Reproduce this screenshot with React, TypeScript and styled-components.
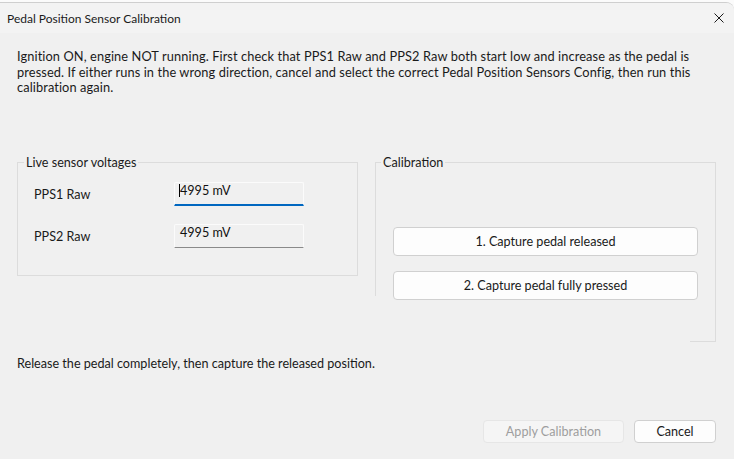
import React from "react";
import styled, { createGlobalStyle } from "styled-components";

const GlobalStyle = createGlobalStyle`
  html, body {
    margin: 0;
    padding: 0;
    background: #fbfbfb;
  }
  * {
    box-sizing: border-box;
  }
`;

const font = `"Lato", "Liberation Sans", sans-serif`;

const Window = styled.div`
  margin-top: 2px;
  height: 457px;
  background: #f0f0f0;
  border-top: 1px solid #cfcfcf;
  border-top-right-radius: 8px;
  display: flex;
  flex-direction: column;
  font-family: ${font};
  font-size: 12.6px;
  color: #1a1a1a;
  overflow: hidden;
`;

const TitleBar = styled.div`
  height: 30px;
  flex-shrink: 0;
  display: flex;
  align-items: center;
  justify-content: space-between;
  padding: 0 10px 0 7px;
  background: #f3f3f3;
`;

const TitleText = styled.span`
  font-size: 12px;
  color: #1b1b1b;
`;

const CloseButton = styled.span`
  display: flex;
  align-items: center;
  color: #1b1b1b;
`;

const Body = styled.div`
  flex: 1;
  display: flex;
  flex-direction: column;
  padding: 16px 18px 16px 17px;
`;

const Intro = styled.p`
  margin: 0;
  font-size: 12.8px;
  line-height: 15.5px;
  letter-spacing: 0.1px;
`;

const Groups = styled.div`
  display: grid;
  grid-template-columns: 341px 341px;
  column-gap: 17px;
  align-items: start;
  margin-top: 66px;
`;

const GroupBox = styled.div<{ partial?: boolean }>`
  position: relative;
  border: 1px solid #dcdcdc;
  ${(p) =>
    p.partial &&
    `
    border-left: none;
    border-bottom: none;
    &::before {
      content: "";
      position: absolute;
      left: 0;
      top: 0;
      width: 1px;
      height: 133px;
      background: #dcdcdc;
    }
    &::after {
      content: "";
      position: absolute;
      right: -1px;
      bottom: 0;
      width: 26px;
      height: 1px;
      background: #dcdcdc;
    }
  `}
`;

const Legend = styled.span`
  position: absolute;
  top: -8px;
  left: 6px;
  padding: 0 2px;
  line-height: 16px;
  background: #f0f0f0;
`;

const SensorList = styled.div`
  display: flex;
  flex-direction: column;
  gap: 18px;
  padding: 19px 0 27px 16px;
`;

const SensorRow = styled.div`
  display: flex;
  align-items: center;
`;

const SensorLabel = styled.span`
  width: 140px;
  padding-top: 1px;
`;

const ValueBox = styled.div<{ focused?: boolean }>`
  position: relative;
  width: 130px;
  height: 24px;
  padding: 0 5px;
  line-height: 16px;
  background: #f0f0f0;
  border: 1px solid #fbfbfb;
  border-bottom: ${(p) => (p.focused ? "2px solid #0067c0" : "1px solid #8a8a8a")};
  border-radius: 2px 2px 0 0;
  color: #111;
`;

const Caret = styled.span`
  position: absolute;
  left: 4px;
  top: 1px;
  width: 1px;
  height: 13px;
  background: #000;
`;

const ActionList = styled.div`
  display: flex;
  flex-direction: column;
  gap: 15px;
  padding: 64px 17px 0 18px;
  height: 179px;
`;

const Button = styled.button<{ disabled?: boolean }>`
  font-family: ${font};
  font-size: 12.6px;
  height: 29px;
  border-radius: 4px;
  border: 1px solid ${(p) => (p.disabled ? "#e6e6e6" : "#d0d0d0")};
  background: ${(p) => (p.disabled ? "#f5f5f5" : "#fdfdfd")};
  color: ${(p) => (p.disabled ? "#9e9e9e" : "#1a1a1a")};
  padding: 0;
  cursor: default;
`;

const FooterButton = styled(Button)<{ w: number }>`
  height: 23px;
  width: ${(p) => p.w}px;
`;

const Status = styled.div`
  margin-top: 14px;
  line-height: 16px;
`;

const Footer = styled.div`
  margin-top: auto;
  display: flex;
  justify-content: flex-end;
  gap: 10px;
`;

const CloseIcon = () => (
  <svg width="10" height="10" viewBox="0 0 10 10" stroke="currentColor" strokeWidth="1">
    <line x1="0.5" y1="0.5" x2="9.5" y2="9.5" />
    <line x1="9.5" y1="0.5" x2="0.5" y2="9.5" />
  </svg>
);

export default function App() {
  return (
    <>
      <GlobalStyle />
      <Window>
        <TitleBar>
          <TitleText>Pedal Position Sensor Calibration</TitleText>
          <CloseButton>
            <CloseIcon />
          </CloseButton>
        </TitleBar>
        <Body>
          <Intro>
            Ignition ON, engine NOT running. First check that PPS1 Raw and PPS2 Raw both start low and increase as the pedal is
            <br />
            pressed. If either runs in the wrong direction, cancel and select the correct Pedal Position Sensors Config, then run this
            <br />
            calibration again.
          </Intro>
          <Groups>
            <GroupBox>
              <Legend>Live sensor voltages</Legend>
              <SensorList>
                <SensorRow>
                  <SensorLabel>PPS1 Raw</SensorLabel>
                  <ValueBox focused>
                    <Caret />
                    4995 mV
                  </ValueBox>
                </SensorRow>
                <SensorRow>
                  <SensorLabel>PPS2 Raw</SensorLabel>
                  <ValueBox>4995 mV</ValueBox>
                </SensorRow>
              </SensorList>
            </GroupBox>
            <GroupBox partial>
              <Legend>Calibration</Legend>
              <ActionList>
                <Button>1. Capture pedal released</Button>
                <Button>2. Capture pedal fully pressed</Button>
              </ActionList>
            </GroupBox>
          </Groups>
          <Status>Release the pedal completely, then capture the released position.</Status>
          <Footer>
            <FooterButton w={141} disabled>
              Apply Calibration
            </FooterButton>
            <FooterButton w={82}>Cancel</FooterButton>
          </Footer>
        </Body>
      </Window>
    </>
  );
}
